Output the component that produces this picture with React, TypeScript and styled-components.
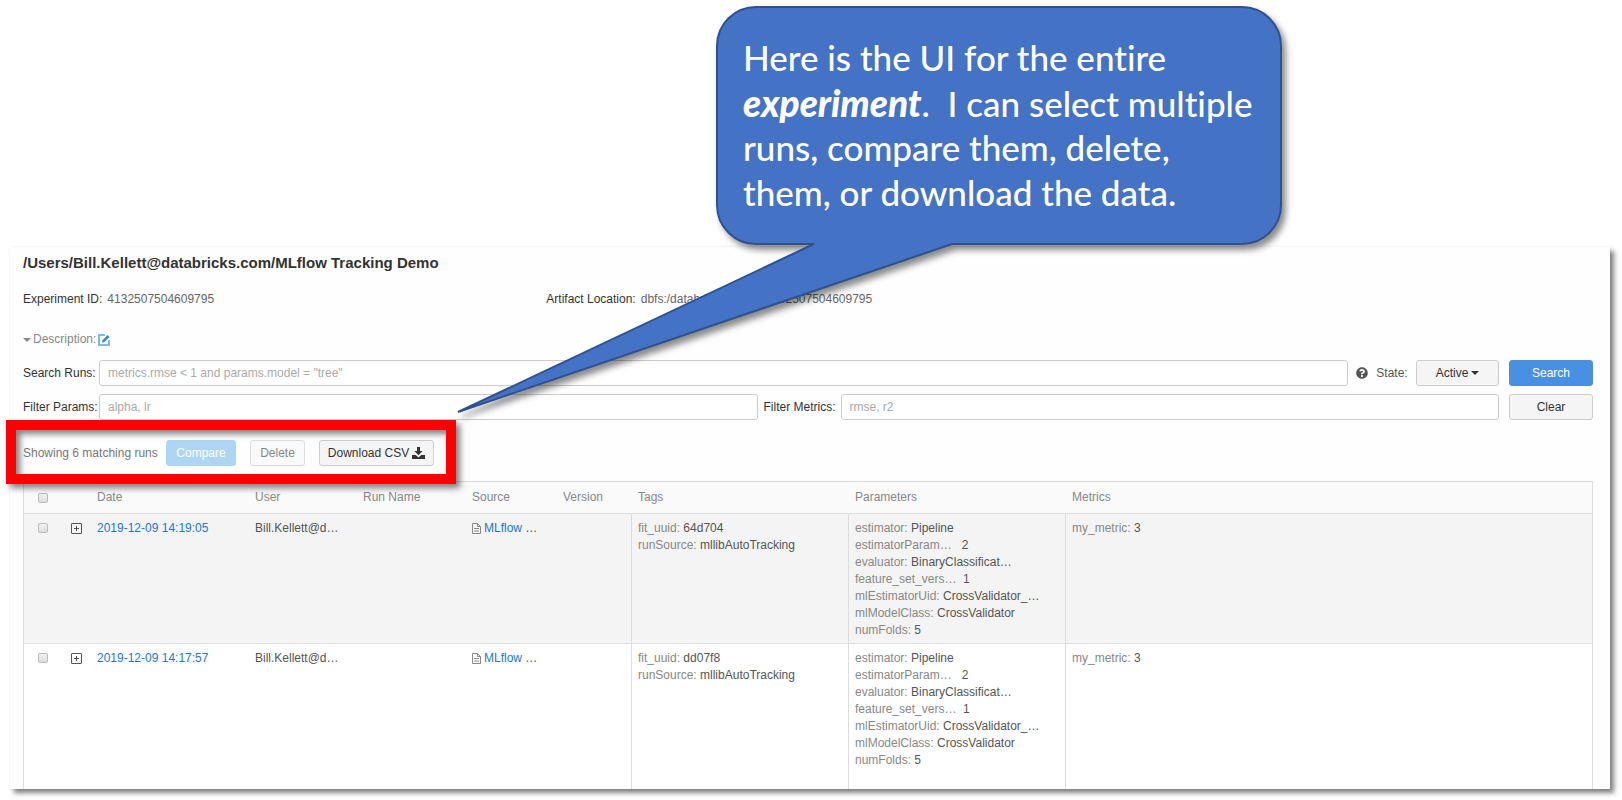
import React from "react";
import styled, { createGlobalStyle } from "styled-components";
import { FaQuestionCircle } from "react-icons/fa";

const GlobalStyle = createGlobalStyle`
  * { box-sizing: border-box; }
  body {
    margin: 0;
    background: #fff;
    color: #333;
    font: 12px/17px "Liberation Sans", Arial, sans-serif;
  }
  button, input { font: inherit; }
`;

const Slide = styled.main`
  position: relative;
  padding: 247px 12px 12px 10px;
`;

const Card = styled.section`
  padding: 6px 17px 0 13px;
  background: #fefefe;
  box-shadow: 4px 4px 5px rgba(0, 0, 0, 0.5), 0 0 2px rgba(0, 0, 0, 0.06);
`;

const Title = styled.h1`
  margin: 0;
  font-size: 15px;
  line-height: 20px;
`;

const Meta = styled.dl`
  display: grid;
  grid-template-columns: 1fr 2fr;
  margin: 18px 0 0;
`;

const MetaItem = styled.div`
  display: flex;
  gap: 5px;
`;

const MetaValue = styled.dd`
  margin: 0;
  color: #666;
`;

const Description = styled.div`
  display: flex;
  align-items: center;
  gap: 2px;
  margin-top: 23px;
  color: #888;
`;

const Caret = styled.span<{ $color: string }>`
  border: 4px solid transparent;
  border-top-color: ${(p) => p.$color};
  border-bottom: 0;
`;

const IconButton = styled.button`
  display: flex;
  padding: 0;
  border: 0;
  background: none;
`;

const ExpandButton = styled(IconButton)`
  margin-top: 3px;
`;

const Filters = styled.form`
  display: grid;
  gap: 8px;
  margin-top: 12px;
`;

const FilterRow = styled.div`
  display: flex;
  align-items: center;
`;

const Label = styled.label<{ $width: number; $indent?: number }>`
  flex: none;
  width: ${(p) => p.$width}px;
  padding-left: ${(p) => p.$indent ?? 0}px;
  white-space: nowrap;
`;

const TextInput = styled.input`
  flex: 1;
  min-width: 0;
  height: 26px;
  padding: 0 8px;
  border: 1px solid #ccc;
  border-radius: 3px;
  background: #fff;
  &::placeholder { color: #aaa; opacity: 1; }
`;

const StateGroup = styled.div`
  display: flex;
  flex: none;
  align-items: center;
  justify-content: space-between;
  width: 151px;
  padding-left: 8px;
  color: #555;
`;

const Button = styled.button<{ $primary?: boolean; $width: number }>`
  display: flex;
  flex: none;
  align-items: center;
  justify-content: center;
  gap: 3px;
  width: ${(p) => p.$width}px;
  height: 26px;
  padding: 0;
  border: 1px solid ${(p) => (p.$primary ? "#4a90e2" : "#ccc")};
  border-radius: 3px;
  background: ${(p) => (p.$primary ? "#4a90e2" : "#f5f5f5")};
  color: ${(p) => (p.$primary ? "#fff" : "#333")};
  white-space: nowrap;
  &:disabled {
    border-color: ${(p) => (p.$primary ? "#afd5f5" : "#ddd")};
    background: ${(p) => (p.$primary ? "#afd5f5" : "#fafafa")};
    color: ${(p) => (p.$primary ? "#fff" : "#888")};
  }
`;

const SubmitSlot = styled.div`
  margin-left: 10px;
`;

const Actions = styled.div`
  position: relative;
  display: flex;
  align-items: center;
  gap: 14px;
  margin: 20px 0 15px;
  color: #777;
`;

const Count = styled.span`
  width: 129px;
  white-space: nowrap;
`;

const Highlight = styled.div`
  position: absolute;
  top: -20px;
  left: -17px;
  width: 450px;
  height: 64px;
  border: 10px solid #f00;
  filter: drop-shadow(4px 4px 3px rgba(0, 0, 0, 0.5));
  pointer-events: none;
`;

const Table = styled.table`
  width: 100%;
  border: 1px solid #ddd;
  border-bottom: 0;
  border-spacing: 0;
  table-layout: fixed;
`;

const Th = styled.th`
  height: 31px;
  padding: 0 7px;
  background: #fafafa;
  color: #888;
  font-weight: 400;
  text-align: left;
`;

const Row = styled.tr`
  background: #fff;
  &:nth-child(odd) { background: #f4f4f4; }
  &:last-child td { padding-bottom: 20px; }
`;

const Td = styled.td<{ $divided?: boolean }>`
  padding: 6px 6px 4px ${(p) => (p.$divided ? 6 : 7)}px;
  border-top: 1px solid #ddd;
  border-left: ${(p) => (p.$divided ? "1px solid #ddd" : "0")};
  color: #555;
  overflow: hidden;
  text-overflow: ellipsis;
  white-space: nowrap;
  vertical-align: top;
`;

const Check = styled.input`
  appearance: none;
  display: block;
  width: 10px;
  height: 10px;
  margin: 3px 0 3px 7px;
  border: 1px solid #bbb;
  border-radius: 2px;
  background: linear-gradient(#f2f2f2, #ddd);
`;

const Link = styled.a`
  color: #2577ca;
  text-decoration: none;
`;

const Source = styled.span`
  display: flex;
  align-items: center;
  gap: 3px;
`;

const Pair = styled.div`
  color: #888;
  white-space: pre;
`;

const Value = styled.span`
  color: #555;
`;

const Callout = styled.aside`
  position: absolute;
  top: 0;
  left: 450px;
  width: 840px;
  height: 424px;
  pointer-events: none;
`;

const CalloutShape = styled.svg`
  position: absolute;
  inset: 0;
  filter: drop-shadow(4px 5px 3px rgba(0, 0, 0, 0.45));
`;

const CalloutText = styled.p`
  position: relative;
  margin: 0;
  padding: 35px 0 0 293px;
  color: #fff;
  font: 500 35px/45px Lato, Carlito, sans-serif;
  font-variant-ligatures: none;
`;

const CalloutLine = styled.span`
  display: block;
  height: 45px;
  white-space: pre;
`;

const Emphasis = styled.em`
  font-size: 37px;
  font-weight: 900;
`;

const EditIcon = () => (
  <svg width="12" height="12" viewBox="0 0 12 12" fill="none" aria-hidden="true">
    <path d="M11 6V11H1V1H7" stroke="#7db8ee" strokeWidth="2" />
    <path d="M4 8.6L4.5 6.2L9.6 1L11.5 2.9L6.4 8Z" fill="#3a87d8" />
  </svg>
);

const DownloadIcon = () => (
  <svg width="13" height="12" viewBox="0 0 13 12" fill="#333" aria-hidden="true">
    <path d="M5 0H8V4H10.6L6.5 8.2L2.4 4H5Z" />
    <path d="M0 8H3.8L6.5 10.4L9.2 8H13V12H0Z" />
  </svg>
);

const ExpandIcon = () => (
  <svg width="11" height="11" viewBox="0 0 11 11" fill="none" stroke="#555" aria-hidden="true">
    <rect x="0.5" y="0.5" width="10" height="10" rx="0.5" />
    <path d="M3 5.5H8M5.5 3V8" />
  </svg>
);

const NotebookIcon = () => (
  <svg width="9" height="11" viewBox="0 0 9 11" fill="none" stroke="#888" aria-hidden="true">
    <path d="M0.5 0.5H5.5L8.5 3.5V10.5H0.5Z" />
    <path d="M5.5 0.5V3.5H8.5M2 5.5H7M2 8H7" />
  </svg>
);

type Entry = [string, string];

const params: Entry[] = [
  ["estimator:", " Pipeline"],
  ["estimatorParam…", "   2"],
  ["evaluator:", " BinaryClassificat…"],
  ["feature_set_vers…", "  1"],
  ["mlEstimatorUid:", " CrossValidator_…"],
  ["mlModelClass:", " CrossValidator"],
  ["numFolds:", " 5"],
];

const runs = [
  { date: "2019-12-09 14:19:05", uuid: "64d704" },
  { date: "2019-12-09 14:17:57", uuid: "dd07f8" },
];

const Pairs = ({ items }: { items: Entry[] }) => (
  <>
    {items.map(([name, value]) => (
      <Pair key={name}>
        {name}
        <Value>{value}</Value>
      </Pair>
    ))}
  </>
);

const columnWidths = [40, 26, 158, 108, 109, 91, 75, 217, 217];
const headings = ["Date", "User", "Run Name", "Source", "Version", "Tags", "Parameters", "Metrics"];

export default function App() {
  return (
    <Slide>
      <GlobalStyle />
      <Card>
        <Title>/Users/Bill.Kellett@databricks.com/MLflow Tracking Demo</Title>
        <Meta>
          <MetaItem>
            <dt>Experiment ID:</dt>
            <MetaValue>4132507504609795</MetaValue>
          </MetaItem>
          <MetaItem>
            <dt>Artifact Location:</dt>
            <MetaValue>dbfs:/databricks/mlflow/4132507504609795</MetaValue>
          </MetaItem>
        </Meta>
        <Description>
          <Caret $color="#888" />
          Description:
          <IconButton type="button" aria-label="Edit description">
            <EditIcon />
          </IconButton>
        </Description>
        <Filters onSubmit={(e) => e.preventDefault()}>
          <FilterRow>
            <Label htmlFor="search" $width={76}>Search Runs:</Label>
            <TextInput id="search" placeholder={'metrics.rmse < 1 and params.model = "tree"'} />
            <StateGroup>
              <FaQuestionCircle size={12} />
              <span id="state-label">State:</span>
              <Button type="button" aria-labelledby="state-label state" id="state" aria-haspopup="listbox" $width={83}>
                Active <Caret $color="#333" />
              </Button>
            </StateGroup>
            <SubmitSlot>
              <Button type="submit" $primary $width={84}>Search</Button>
            </SubmitSlot>
          </FilterRow>
          <FilterRow>
            <Label htmlFor="params" $width={76}>Filter Params:</Label>
            <TextInput id="params" placeholder="alpha, lr" />
            <Label htmlFor="metrics" $width={83} $indent={6}>Filter Metrics:</Label>
            <TextInput id="metrics" placeholder="rmse, r2" />
            <SubmitSlot>
              <Button type="reset" $width={84}>Clear</Button>
            </SubmitSlot>
          </FilterRow>
        </Filters>
        <Actions>
          <Count>Showing 6 matching runs</Count>
          <Button type="button" disabled $primary $width={70}>Compare</Button>
          <Button type="button" disabled $width={55}>Delete</Button>
          <Button type="button" $width={115}>
            Download CSV <DownloadIcon />
          </Button>
          <Highlight />
        </Actions>
        <Table>
          <colgroup>
            {columnWidths.map((w, i) => (
              <col key={i} width={w} />
            ))}
            <col />
          </colgroup>
          <thead>
            <tr>
              <Th><Check type="checkbox" aria-label="Select all runs" /></Th>
              <Th />
              {headings.map((h) => (
                <Th key={h}>{h}</Th>
              ))}
            </tr>
          </thead>
          <tbody>
            {runs.map((run) => (
              <Row key={run.date}>
                <Td><Check type="checkbox" aria-label={`Select run ${run.date}`} /></Td>
                <Td>
                  <ExpandButton type="button" aria-label="Expand run">
                    <ExpandIcon />
                  </ExpandButton>
                </Td>
                <Td><Link href="#">{run.date}</Link></Td>
                <Td>Bill.Kellett@d…</Td>
                <Td />
                <Td>
                  <Source>
                    <NotebookIcon />
                    <span><Link href="#">MLflow</Link> …</span>
                  </Source>
                </Td>
                <Td />
                <Td $divided>
                  <Pairs items={[["fit_uuid:", ` ${run.uuid}`], ["runSource:", " mllibAutoTracking"]]} />
                </Td>
                <Td $divided><Pairs items={params} /></Td>
                <Td $divided><Pairs items={[["my_metric:", " 3"]]} /></Td>
              </Row>
            ))}
          </tbody>
        </Table>
      </Card>
      <Callout>
        <CalloutShape width="840" height="424" viewBox="0 0 840 424" aria-hidden="true">
          <path
            d="M307 7H792A39 39 0 0 1 831 46V205A39 39 0 0 1 792 244H502L8 412L364 244H307A39 39 0 0 1 267 205V46A39 39 0 0 1 307 7Z"
            fill="#4472c4"
            stroke="#2f528f"
            strokeWidth="2"
          />
        </CalloutShape>
        <CalloutText>
          <CalloutLine>Here is the UI for the entire</CalloutLine>
          <CalloutLine>
            <Emphasis>experiment</Emphasis>
            {".  I can select multiple"}
          </CalloutLine>
          <CalloutLine>runs, compare them, delete,</CalloutLine>
          <CalloutLine>them, or download the data.</CalloutLine>
        </CalloutText>
      </Callout>
    </Slide>
  );
}
